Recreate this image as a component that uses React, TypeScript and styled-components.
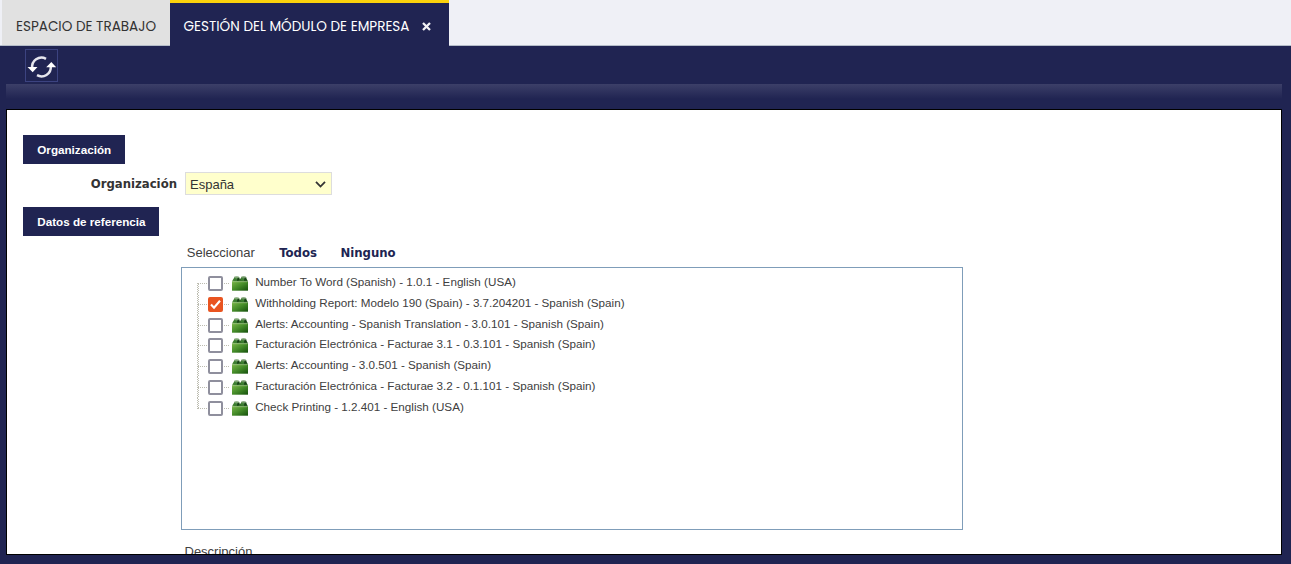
import React from 'react';
import styled, { createGlobalStyle } from 'styled-components';

const NAVY = '#202452';

const Global = createGlobalStyle`
  * { box-sizing: border-box; }
  body { margin: 0; overflow: hidden; background: ${NAVY}; font-family: "Liberation Sans", Arial, sans-serif; color: #404040; }
`;

const Page = styled.div`
  display: flex;
  flex-direction: column;
  height: 564px;
  background: ${NAVY};
`;

const TabBar = styled.div`
  display: flex;
  height: 46px;
  padding-left: 2px;
  background: linear-gradient(#b4bcc8, #b4bcc8) bottom / 100% 1px no-repeat #eff0f6;
`;

const Tab = styled.div<{ $active?: boolean; $width: number }>`
  display: flex;
  align-items: center;
  width: ${p => p.$width}px;
  height: ${p => (p.$active ? 46 : 45)}px;
  padding: ${p => (p.$active ? '5px 0 0 13.5px' : '8px 0 0 14px')};
  border-top: ${p => (p.$active ? '3px solid #fbd20c' : '0')};
  background: ${p => (p.$active ? NAVY : '#e1e1e1')};
  color: ${p => (p.$active ? '#fff' : '#333')};
  font: 400 13.55px/20px Poppins, Lato, sans-serif;
  white-space: nowrap;
`;

const TabLabel = styled.span<{ $width: number }>`
  width: ${p => p.$width}px;
`;

const Close = styled.svg`
  width: 9px;
  height: 9px;
  margin: 0 0 2px 12px;
`;

const Toolbar = styled.div`
  height: 38px;
  padding: 3px 0 0 25px;
`;

const ToolButton = styled.button`
  display: block;
  width: 33px;
  height: 33px;
  padding: 0;
  border: 1px solid #3c4380;
  background: transparent;
  svg { display: block; }
`;

const Shade = styled.div`
  height: 15px;
  margin: 0 9px 10px 6px;
  background: linear-gradient(#3c3f68, ${NAVY});
`;

const Panel = styled.main`
  height: 446px;
  margin: 0 9px 0 6px;
  padding: 25px 0 0 16px;
  border: 1px solid #000;
  background: #fff;
  overflow: hidden;
`;

const Heading = styled.h2<{ $width: number }>`
  width: ${p => p.$width}px;
  height: 29px;
  margin: 0;
  padding-left: 14.3px;
  background: ${NAVY};
  color: #fff;
  font-size: 11.67px;
  line-height: 30px;
  white-space: nowrap;
`;

const Field = styled.div`
  display: flex;
  align-items: center;
  height: 23px;
  margin: 8px 0 12px;
`;

const Label = styled.label`
  width: 154px;
  margin-right: 8px;
  text-align: right;
  color: #333;
  font: bold 13px/20px "DejaVu Sans Condensed", "DejaVu Sans", sans-serif;
  font-stretch: condensed;
`;

const Select = styled.div`
  display: flex;
  align-items: center;
  justify-content: space-between;
  width: 147px;
  height: 23px;
  padding: 2px 5px 0 4px;
  border: 1px solid #ddd;
  background: #ffffcc;
  color: #333;
  font-size: 13px;
`;

const Actions = styled.div`
  display: flex;
  height: 31px;
  padding: 8px 0 0 163.8px;
  font-size: 13px;
  line-height: 18px;
`;

const Action = styled.a<{ $gap: number }>`
  margin-left: ${p => p.$gap}px;
  color: ${NAVY};
  font: bold 13px/18px "DejaVu Sans Condensed", "DejaVu Sans", sans-serif;
  font-stretch: condensed;
`;

const Tree = styled.div`
  width: 782px;
  height: 263px;
  margin-left: 158px;
  padding: 5px 0 0 15px;
  border: 1px solid #7f9db9;
`;

const Row = styled.div<{ $height: number }>`
  display: flex;
  height: ${p => p.$height}px;
`;

const Branch = styled.svg`
  flex: none;
  width: 11px;
  height: 21px;
`;

const Check = styled.span<{ $on?: boolean }>`
  display: flex;
  flex: none;
  width: 15px;
  height: 15px;
  margin-top: 3px;
  border: ${p => (p.$on ? '0' : '2px solid #8f8f9d')};
  border-radius: 2px;
  background: ${p => (p.$on ? '#e95420' : '#fff')};
`;

const Link = styled.span`
  width: 5px;
  height: 1px;
  margin: 10px 3px 0 1px;
  background: repeating-linear-gradient(90deg, #bcbcb0 0 1px, transparent 1px 2px);
`;

const BrickIcon = styled.svg`
  flex: none;
  width: 16px;
  height: 15px;
  margin-top: 2.5px;
`;

const RowText = styled.span`
  margin: 2px 0 0 7.2px;
  font-size: 11.67px;
  line-height: 14px;
  white-space: nowrap;
`;

const Description = styled.div`
  padding: 14px 0 0 161.5px;
  font-size: 13px;
  line-height: 15px;
`;

const rows = [
  { text: 'Number To Word (Spanish) - 1.0.1 - English (USA)', height: 21 },
  { text: 'Withholding Report: Modelo 190 (Spain) - 3.7.204201 - Spanish (Spain)', height: 21, on: true },
  { text: 'Alerts: Accounting - Spanish Translation - 3.0.101 - Spanish (Spain)', height: 20 },
  { text: 'Facturación Electrónica - Facturae 3.1 - 0.3.101 - Spanish (Spain)', height: 21 },
  { text: 'Alerts: Accounting - 3.0.501 - Spanish (Spain)', height: 21 },
  { text: 'Facturación Electrónica - Facturae 3.2 - 0.1.101 - Spanish (Spain)', height: 21 },
  { text: 'Check Printing - 1.2.401 - English (USA)', height: 21 },
];

function Brick() {
  return (
    <BrickIcon viewBox="0 0 16 15">
      <defs>
        <linearGradient id="brick" x1="0" y1="0" x2="1" y2="1">
          <stop offset="0" stopColor="#79b548" />
          <stop offset=".5" stopColor="#438a28" />
          <stop offset="1" stopColor="#15500c" />
        </linearGradient>
        <linearGradient id="lid" x1="0" y1="0" x2="1" y2="0">
          <stop offset="0" stopColor="#4c8a38" />
          <stop offset="1" stopColor="#1f521a" />
        </linearGradient>
      </defs>
      <path d="M0 5.5 1.5 2.5h13L16 5.5z" fill="url(#lid)" />
      <path d="M0 5.5h16V14.7H0z" fill="url(#brick)" />
      <path d="M2 1.2v3q2.5 1.4 5.2 0v-3zM9 1.2v3q2.5 1.4 5.2 0v-3z" fill="#3b7d30" />
      <path d="M5.2 1.2h2v3l-2 .7zM12.2 1.2h2v3l-2 .7z" fill="#173f17" />
      <ellipse cx="4.6" cy="1.3" rx="2.6" ry="1.1" fill="#7fa574" />
      <ellipse cx="11.6" cy="1.3" rx="2.6" ry="1.1" fill="#6f9665" />
      <path d="M0 5.9h15" stroke="#9ac678" strokeWidth=".6" opacity=".6" />
    </BrickIcon>
  );
}

export default function App() {
  return (
    <Page>
      <Global />
      <TabBar>
        <Tab $width={168}><TabLabel $width={142}>ESPACIO DE TRABAJO</TabLabel></Tab>
        <Tab $active $width={279}>
          <TabLabel $width={226}>GESTIÓN DEL MÓDULO DE EMPRESA</TabLabel>
          <Close viewBox="0 0 9 9"><path d="M1 1l7 7M8 1L1 8" stroke="#f2f2f6" strokeWidth="2.3" /></Close>
        </Tab>
      </TabBar>
      <Toolbar>
        <ToolButton aria-label="Refrescar">
          <svg width="31" height="31" viewBox="0 0 31 31" fill="none">
            <path d="M20 8.8A9.3 9.3 0 0 0 6.3 18.5" stroke="#e6e6ee" strokeWidth="2.5" />
            <path d="M11 25.2A9.3 9.3 0 0 0 24.8 16.5" stroke="#e6e6ee" strokeWidth="2.5" />
            <path d="M1.5 17h10l-4.8 5.2zM20.2 17.2h10L25.3 12z" fill="#fff" />
          </svg>
        </ToolButton>
      </Toolbar>
      <Shade />
      <Panel>
        <Heading $width={102}>Organización</Heading>
        <Field>
          <Label>Organización</Label>
          <Select>
            España
            <svg width="11" height="8" viewBox="0 0 11 8"><path d="M1 .8l4.5 4.7L10 .8" fill="none" stroke="#333" strokeWidth="1.8" /></svg>
          </Select>
        </Field>
        <Heading $width={136}>Datos de referencia</Heading>
        <Actions>
          Seleccionar
          <Action $gap={24.6}>Todos</Action>
          <Action $gap={23.4}>Ninguno</Action>
        </Actions>
        <Tree>
          {rows.map((row, i) => (
            <Row key={row.text} $height={row.height}>
              <Branch viewBox="0 0 11 21">
                <path
                  d={`M.5 ${i === 0 ? 10 : 0}V${i === rows.length - 1 ? 11 : row.height}M1.5 ${i === 0 ? 11 : 1}V${i === rows.length - 1 ? 11 : row.height}M1 10.5H11`}
                  stroke="#bcbcb0"
                  strokeDasharray="1 1"
                />
              </Branch>
              <Check $on={row.on}>
                {row.on && (
                  <svg width="15" height="15" viewBox="0 0 15 15"><path d="M3 7.6l3 3.1 6-7" fill="none" stroke="#fff" strokeWidth="2.1" /></svg>
                )}
              </Check>
              <Link />
              <Brick />
              <RowText>{row.text}</RowText>
            </Row>
          ))}
        </Tree>
        <Description>Descripción</Description>
      </Panel>
    </Page>
  );
}
